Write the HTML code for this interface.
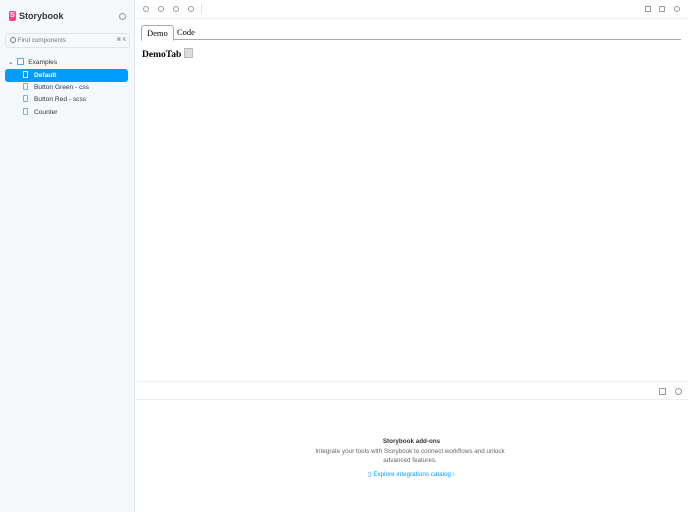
<!DOCTYPE html>
<html><head><style>
body{margin:0;width:688px;height:512px;font-family:"Liberation Sans",sans-serif;position:relative;overflow:hidden;background:#fff}
.side{position:absolute;left:0;top:0;width:134px;height:512px;background:#f6f9fc;border-right:1px solid #e4e8ec}
.logo{position:absolute;left:9px;top:11px;font-weight:bold;font-size:9px;color:#333;display:flex;align-items:center;gap:3px}
.logo .s{width:7px;height:10px;background:#ff4785;border-radius:1.5px;color:#fff;font-size:7px;text-align:center;line-height:10px}
.gear{position:absolute;left:119px;top:13px;width:5px;height:5px;border:1.5px solid #999;border-radius:50%}
.search{position:absolute;left:5px;top:33px;width:123px;height:13px;border:1px solid #dfe3e8;border-radius:3px;background:#f6f9fc;font-size:6.3px;color:#777;line-height:13px}
.item{position:absolute;left:5px;width:123px;height:12px;font-size:6.6px;color:#333;line-height:12px}
.bm{display:inline-block;width:3px;height:5px;border:1px solid #67b6ec;border-radius:1px;vertical-align:-1px;margin-right:6px}
.tb{position:absolute;left:135px;top:0;right:0;height:18px;border-bottom:1px solid #eceff2}
.ic{position:absolute;top:6px;width:4px;height:4px;border:1px solid #999;border-radius:50%}
.tabs{position:absolute;left:141px;top:25px;width:540px;height:14px;border-bottom:1px solid #aaa;font-family:"Liberation Serif",serif;font-size:8.5px}
.tab{position:absolute;top:0;height:14px;line-height:15px;padding:0 5px}
.bp{position:absolute;left:135px;top:381px;right:0;bottom:0;border-top:1px solid #eceff2}
</style></head><body>
<div class="side">
<div class="logo"><span class="s">S</span>Storybook</div>
<div class="gear"></div>
<div class="search"><span style="margin-left:4px;display:inline-block;width:4px;height:4px;border:1px solid #777;border-radius:50%;vertical-align:-1px"></span> Find components<span style="position:absolute;right:3px;font-size:5px">⌘ K</span></div>
<div class="item" style="top:57px;left:8px">⌄ <span style="display:inline-block;width:5px;height:5px;border:1px solid #5aa8e6;vertical-align:-1px;margin:0 2px"></span> Examples</div>
<div class="item" style="top:69px;background:#029cfd;border-radius:3px;color:#fff;font-weight:bold;height:13px;line-height:13px"><span style="margin-left:18px;border-color:#fff" class="bm" ></span>Default</div>
<div class="item" style="top:82px"><span style="margin-left:18px" class="bm"></span>Button Green - css</div>
<div class="item" style="top:94px"><span style="margin-left:18px" class="bm"></span>Button Red - scss</div>
<div class="item" style="top:107px"><span style="margin-left:18px" class="bm"></span>Counter</div>
</div>
<div class="tb">
<div class="ic" style="left:8px"></div><div class="ic" style="left:23px"></div><div class="ic" style="left:38px"></div><div class="ic" style="left:53px"></div>
<div style="position:absolute;left:66px;top:4px;width:1px;height:10px;background:#e4e4e4"></div>
<div class="ic" style="left:510px;border-radius:0;border-style:dashed"></div><div class="ic" style="left:524px;border-radius:1px"></div><div class="ic" style="left:539px"></div>
</div>
<div class="tabs">
<div class="tab" style="left:0;border:1px solid #aaa;border-bottom:1px solid #fff;border-radius:3px 3px 0 0;background:#fff">Demo</div>
<div class="tab" style="left:31px">Code</div>
</div>
<div style="position:absolute;left:142px;top:48px;font-family:'Liberation Serif',serif;font-weight:bold;font-size:9.5px">DemoTab <span style="display:inline-block;width:7px;height:8px;background:#ddd;border:1px solid #bbb;vertical-align:-1px"></span></div>
<div class="bp">
<div style="position:absolute;left:0;right:0;top:0;height:17px;border-bottom:1px solid #eceff2"></div>
<div style="position:absolute;right:22px;top:6px;width:5px;height:5px;border:1px solid #999"></div>
<div style="position:absolute;right:6px;top:6px;width:5px;height:5px;border:1px solid #999;border-radius:50%"></div>
<div style="position:absolute;left:0;right:0;top:56px;text-align:center;font-size:6.3px;color:#333;font-weight:bold">Storybook add-ons</div>
<div style="position:absolute;left:175px;width:200px;top:66px;text-align:center;font-size:6.3px;color:#666;line-height:8.5px">Integrate your tools with Storybook to connect workflows and unlock advanced features.</div>
<div style="position:absolute;left:0;right:0;top:89px;text-align:center;font-size:6.3px;color:#029cfd">▯ Explore integrations catalog ›</div>
</div>
</body></html>
